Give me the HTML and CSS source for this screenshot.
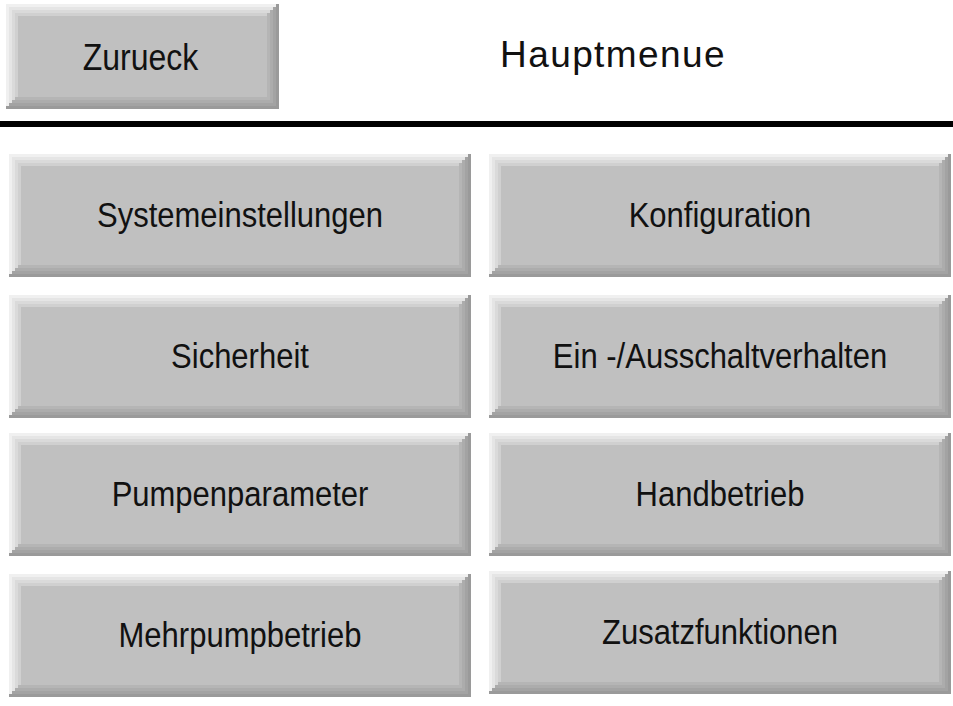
FILE: index.html
```html
<!DOCTYPE html>
<html lang="de">
<head>
<meta charset="utf-8">
<title>Hauptmenue</title>
<link rel="stylesheet" href="styles.css">
</head>
<body>
<div class="screen">
  <header class="topbar">
    <button class="bevel back-btn"><span class="label">Zurueck</span></button>
    <h1 class="title"><span class="label">Hauptmenue</span></h1>
  </header>
  <div class="rule"></div>
  <main class="menu">
    <button class="bevel item"><span class="label">Systemeinstellungen</span></button>
    <button class="bevel item"><span class="label">Konfiguration</span></button>
    <button class="bevel item"><span class="label">Sicherheit</span></button>
    <button class="bevel item"><span class="label">Ein -/Ausschaltverhalten</span></button>
    <button class="bevel item row3"><span class="label">Pumpenparameter</span></button>
    <button class="bevel item row3"><span class="label">Handbetrieb</span></button>
    <button class="bevel item row4"><span class="label">Mehrpumpbetrieb</span></button>
    <button class="bevel item row4 raised"><span class="label">Zusatzfunktionen</span></button>
  </main>
</div>
</body>
</html>
```

FILE: styles.css
```css
html, body {
  margin: 0;
  padding: 0;
  background: #ffffff;
}

.screen {
  width: 953px;
  height: 706px;
  overflow: hidden;
  font-family: "Liberation Sans", Arial, sans-serif;
  color: #000000;
}

/* Stepped 3D bevel: four 3px bands on each side, dark bands win at the corners */
.bevel {
  display: flex;
  align-items: center;
  justify-content: center;
  margin: 0;
  padding: 0;
  border: none;
  background: #c0c0c0;
  font-family: inherit;
  color: #000000;
  cursor: pointer;
  box-shadow:
    inset -3px -3px 0 0 #9a9a9a,
    inset 3px 3px 0 0 #f0f0f0,
    inset -6px -6px 0 0 #a3a3a3,
    inset 6px 6px 0 0 #e5e5e5,
    inset -9px -9px 0 0 #acacac,
    inset 9px 9px 0 0 #dadada,
    inset -12px -12px 0 0 #b5b5b5,
    inset 12px 12px 0 0 #d0d0d0;
}

.label {
  display: inline-block;
  font-size: 31px;
  line-height: 1;
  white-space: nowrap;
  transform: scaleY(1.14);
  color: #111111;
}

.topbar {
  display: flex;
  align-items: flex-start;
  height: 121px;
}

.back-btn {
  width: 273px;
  height: 105px;
  margin: 4px 0 0 6px;
}

.back-btn .label {
  font-size: 32px;
  margin-left: -4px;
}

.title {
  flex: 1;
  margin: 0;
  height: 109px;
  display: flex;
  align-items: center;
  justify-content: center;
  font-weight: normal;
}

.title .label {
  font-size: 37px;
  letter-spacing: 1.4px;
  transform: none;
  margin-left: -6px;
}

.rule {
  height: 6px;
  background: #000000;
}

.menu {
  display: grid;
  grid-template-columns: 462px 462px;
  grid-auto-rows: 123px;
  column-gap: 18px;
  row-gap: 18px;
  margin: 27px 0 0 9px;
}

.item {
  width: 462px;
  height: 123px;
}

.row3 {
  margin-top: -3px;
}

.row4 {
  margin-top: -3px;
}

.row4.raised {
  margin-top: -6px;
}
```
